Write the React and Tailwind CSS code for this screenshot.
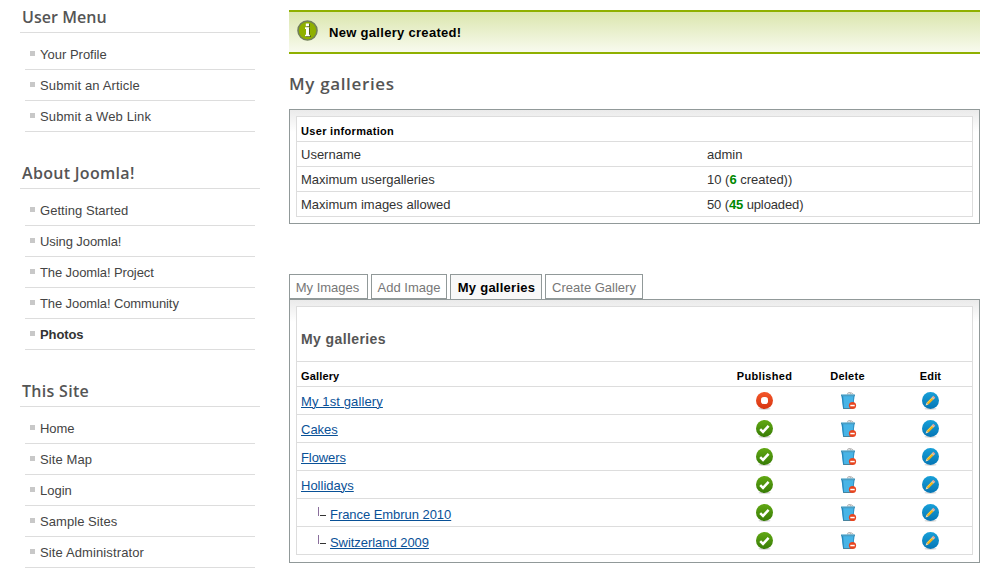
import React from "react";

const menus = [
  {
    title: "User Menu",
    tracking: "tracking-[0.05px]",
    items: [
      { label: "Your Profile" },
      { label: "Submit an Article", tracking: "tracking-[0.13px]" },
      { label: "Submit a Web Link", tracking: "tracking-[0.13px]" },
    ],
  },
  {
    title: "About Joomla!",
    tracking: "tracking-[0.3px]",
    items: [
      { label: "Getting Started", tracking: "tracking-[0.05px]" },
      { label: "Using Joomla!", tracking: "tracking-[-0.08px]" },
      { label: "The Joomla! Project", tracking: "tracking-[-0.1px]" },
      { label: "The Joomla! Community", tracking: "tracking-[-0.1px]" },
      { label: "Photos", tracking: "tracking-[-0.1px]", current: true },
    ],
  },
  {
    title: "This Site",
    tracking: "tracking-[0.3px]",
    items: [
      { label: "Home", tracking: "tracking-[-0.1px]" },
      { label: "Site Map", tracking: "tracking-[0.1px]" },
      { label: "Login" },
      { label: "Sample Sites", tracking: "tracking-[0.06px]" },
      { label: "Site Administrator", tracking: "tracking-[0.12px]" },
    ],
  },
];

const galleries = [
  { name: "My 1st gallery", published: false, tracking: "tracking-[0.12px]" },
  { name: "Cakes", published: true },
  { name: "Flowers", published: true, tracking: "tracking-[-0.1px]" },
  { name: "Hollidays", published: true },
  { name: "France Embrun 2010", published: true, child: true, tracking: "tracking-[-0.05px]" },
  { name: "Switzerland 2009", published: true, child: true, tracking: "tracking-[-0.05px]" },
];

function InfoIcon() {
  return (
    <svg width="22" height="22" viewBox="0 0 22 22" className="block">
      <circle cx="10.5" cy="10.5" r="9.5" fill="#8fb000" stroke="#72805a" strokeWidth="1.6" />
      <path d="M9.8 4h3.2v3.2H9.8zM9 8h4v7.4h1V17H8.5v-1.4H10V9.6H9z" fill="#4f5f18" />
      <path d="M8.8 3.5h3.2v2.8H8.8zM8 7.3h4v7.4h.9v1.5H8v-1.5h1V8.9H8z" fill="#fff" />
    </svg>
  );
}

function StatusIcon({ published }) {
  return (
    <svg width="18" height="18" viewBox="-0.5 0 18 18" className="block">
      <defs>
        <linearGradient id="okFill" x1="0" y1="0" x2="0" y2="1">
          <stop offset="0" stopColor="#62a814" />
          <stop offset="1" stopColor="#377c06" />
        </linearGradient>
        <linearGradient id="offFill" x1="0" y1="0" x2="0" y2="1">
          <stop offset="0" stopColor="#f4572b" />
          <stop offset="1" stopColor="#d63510" />
        </linearGradient>
      </defs>
      <ellipse cx="9" cy="16.7" rx="6" ry="1.2" fill="#000" opacity=".16" />
      <circle cx="9" cy="8.5" r="8.5" fill={published ? "url(#okFill)" : "url(#offFill)"} />
      {published ? (
        <path d="M4.7 9.2l2.8 2.7 5.6-6" fill="none" stroke="#fff" strokeWidth="2.5" />
      ) : (
        <rect x="5.5" y="5" width="7" height="7" rx="2.8" fill="#fff" />
      )}
    </svg>
  );
}

function TrashIcon() {
  return (
    <svg width="18" height="18" viewBox="-0.5 0 18 18" className="block">
      <path d="M7.8 2.8l.6-1.9 2.4-.6 2.6 1.4.6 1.6z" fill="#f2f2f2" stroke="#a5a5a5" strokeWidth=".8" />
      <path d="M10.5 1.2l1.2 1.5" stroke="#777" strokeWidth=".8" />
      <path d="M2.1 3.5h12.8l-1.1 13.2H3.6z" fill="#48b4e6" />
      <path d="M2.1 4l1.5 12.6h1L3.6 4z" fill="#2788bd" />
      <path d="M13.9 4l-.8 9h.9l.9-9z" fill="#328fc0" />
      <path d="M1.5 2.5h14v1.7h-14z" fill="#3e93bb" />
      <path d="M2.4 2.5h12.2v.7H2.4z" fill="#8acbe5" />
      <path d="M3.8 16.2h8.4v.8H3.8z" fill="#3f7288" />
      <circle cx="13" cy="13.5" r="3.6" fill="#e8451f" />
      <path d="M10.8 12.8h4.4v1.5h-4.4z" fill="#fff" />
    </svg>
  );
}

function EditIcon() {
  return (
    <svg width="18" height="18" viewBox="-0.5 0 18 18" className="block">
      <defs>
        <linearGradient id="editFill" x1="0" y1="0" x2="0" y2="1">
          <stop offset="0" stopColor="#18a0d8" />
          <stop offset="1" stopColor="#0475b5" />
        </linearGradient>
      </defs>
      <ellipse cx="9" cy="16.7" rx="6" ry="1.2" fill="#000" opacity=".14" />
      <circle cx="9" cy="8.5" r="8.5" fill="url(#editFill)" />
      <path d="M6 11.6l5.5-5.5" stroke="#f3b41b" strokeWidth="2.7" />
      <path d="M5.5 10.9l5.4-5.4" stroke="#ffd75c" strokeWidth=".8" />
      <path d="M11 6.6l1.1-1.1" stroke="#c9c9c9" strokeWidth="2.7" />
      <path d="M11.9 5.7l.9-.9" stroke="#f2a08a" strokeWidth="2.7" />
      <path d="M5 10.7l1.9 1.9-2.8.9z" fill="#f4dcae" />
    </svg>
  );
}

function BranchIcon() {
  return (
    <svg width="9" height="10" viewBox="0 0 9 10" className="block">
      <path d="M1.5 0v9" stroke="#8a6f9c" />
      <path d="M3 8.5h6" stroke="#333" />
    </svg>
  );
}

function Menu({ title, tracking, items }) {
  return (
    <section className="mb-[24px]">
      <h3 className={`h-[33px] border-b border-[#ddd] pl-[2px] font-['Open_Sans',sans-serif] text-[16px] leading-[34px] font-semibold text-[#555] ${tracking}`}>
        {title}
      </h3>
      <ul className="mx-[5px] pt-[6px]">
        {items.map(({ label, tracking: spacing = "", current }) => (
          <li key={label} className="flex h-[31px] items-center border-b border-[#ddd] pl-[5px]">
            <span className="mb-[1px] h-[5px] w-[5px] bg-[#c8c8c8]" />
            <a className={`ml-[5px] pt-[1px] ${spacing} ${current ? "font-bold text-[#333]" : "text-[#444]"}`}>{label}</a>
          </li>
        ))}
      </ul>
    </section>
  );
}

function Panel({ children, bottom }) {
  return (
    <div className={`border border-[#919999] bg-[linear-gradient(#eaeaea,#fff_22px)] px-[6px] pt-[6px] ${bottom}`}>
      <div className="border border-[#ddd] bg-white">{children}</div>
    </div>
  );
}

function InfoRow({ label, children, last }) {
  return (
    <div className={`grid grid-cols-[406px_1fr] items-center pt-[2px] pl-[4px] ${last ? "h-[24px]" : "h-[25px] border-b border-[#ddd]"}`}>
      <span>{label}</span>
      <span>{children}</span>
    </div>
  );
}

function Tab({ label, width, active }) {
  return (
    <button
      className={`h-[25px] border border-[#919999] text-center leading-[25px] whitespace-nowrap ${width} ${
        active ? "border-b-0 bg-[#f8f8f8] pl-[1px] font-bold tracking-[0.25px] text-black" : "bg-white text-[#777]"
      }`}
    >
      {label}
    </button>
  );
}

const columns = "grid grid-cols-[426px_83px_83px_83px] items-center";

export default function App() {
  return (
    <div className="flex h-[574px] w-[1000px] overflow-hidden bg-white font-['Liberation_Sans',Arial,sans-serif] text-[13px] leading-[16px] text-[#333]">
      <aside className="ml-[20px] w-[240px] shrink-0">
        {menus.map((menu) => (
          <Menu key={menu.title} {...menu} />
        ))}
      </aside>

      <main className="ml-[29px] w-[691px] shrink-0 pt-[10px]">
        <div className="flex h-[44px] items-center border-y-2 border-[#8fb000] bg-[linear-gradient(#dbe6ae,#f8faee)] pl-[8px] font-bold text-black">
          <div className="mb-[3px]">
            <InfoIcon />
          </div>
          <span className="ml-[10px] pt-[1px] tracking-[0.3px]">New gallery created!</span>
        </div>

        <h2 className="mt-[17px] mb-[12px] h-[26px] font-['Open_Sans',sans-serif] text-[17px] leading-[26px] font-semibold tracking-[0.65px] text-[#555]">
          My galleries
        </h2>

        <Panel bottom="pb-[6px]">
          <div className="flex h-[25px] items-center border-b border-[#ddd] pt-[3px] pl-[4px] text-[11px] font-bold tracking-[0.32px] text-black">
            User information
          </div>
          <InfoRow label="Username">admin</InfoRow>
          <InfoRow label="Maximum usergalleries">
            10 (<b className="text-[#080]">6</b> created))
          </InfoRow>
          <InfoRow label="Maximum images allowed" last>
            <span className="tracking-[-0.12px]">
              50 (<b className="text-[#080]">45</b> uploaded)
            </span>
          </InfoRow>
        </Panel>

        <div className="mt-[50px] flex">
          <Tab label="My Images" width="w-[79px] mr-[3px] pr-[2px]" />
          <Tab label="Add Image" width="w-[76px] mr-[3px]" />
          <Tab label="My galleries" width="w-[92px] mr-[3px]" active />
          <Tab label="Create Gallery" width="w-[98px]" />
        </div>

        <Panel bottom="pb-[7px]">
          <h4 className="h-[55px] border-b border-[#ddd] pt-[24px] pl-[4px] text-[14px] font-bold tracking-[0.4px] text-[#555]">My galleries</h4>
          <div className={`${columns} h-[25px] border-b border-[#ddd] pt-[3px] text-[11px] font-bold tracking-[0.15px] text-black`}>
            <span className="pl-[4px]">Gallery</span>
            <span className="text-center tracking-[0.32px]">Published</span>
            <span className="text-center tracking-[0.25px]">Delete</span>
            <span className="text-center">Edit</span>
          </div>
          {galleries.map(({ name, published, child, tracking = "" }, i) => (
            <div key={name} className={`${columns} ${i === galleries.length - 1 ? "h-[27px]" : "h-[28px] border-b border-[#ddd]"}`}>
              <div className={`flex items-center ${child ? "pt-[4px] pl-[20px]" : "pt-[3px] pl-[4px]"}`}>
                {child && (
                  <span className="mr-[4px] mb-[6px]">
                    <BranchIcon />
                  </span>
                )}
                <a className={`text-[#095197] underline decoration-1 underline-offset-1 ${tracking}`}>{name}</a>
              </div>
              <div className="flex justify-center pr-[1px]">
                <StatusIcon published={published} />
              </div>
              <div className="flex justify-center pl-[1px]">
                <TrashIcon />
              </div>
              <div className="flex justify-center pr-[1px]">
                <EditIcon />
              </div>
            </div>
          ))}
        </Panel>
      </main>
    </div>
  );
}
